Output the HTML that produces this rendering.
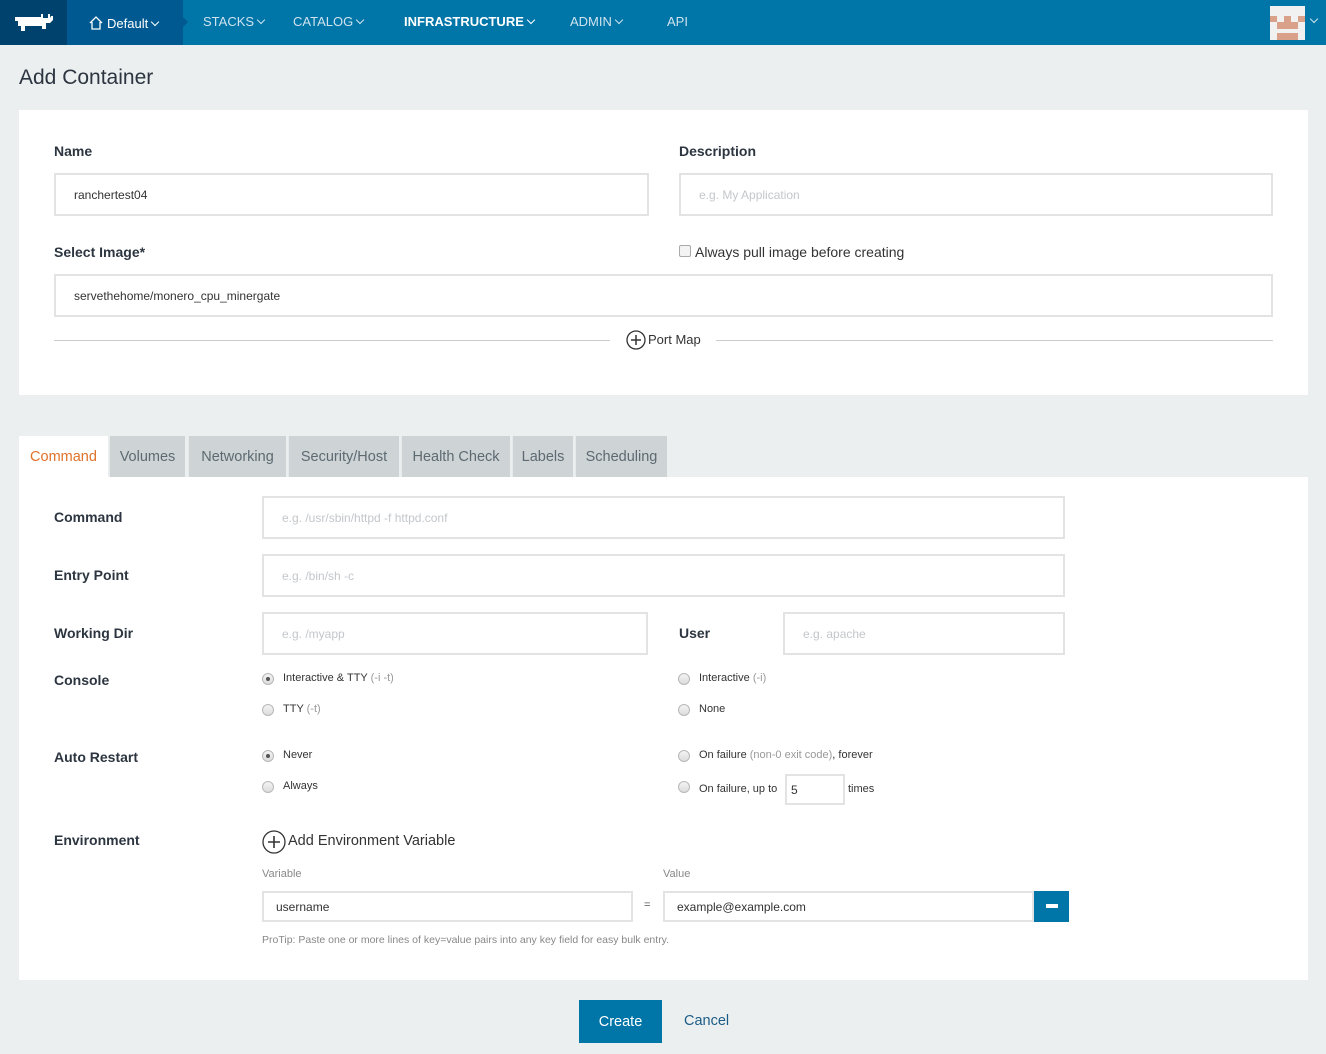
<!DOCTYPE html>
<html><head><meta charset="utf-8">
<style>
*{box-sizing:border-box;margin:0;padding:0}
body{width:1326px;height:1054px;background:#ebeff0;font-family:"Liberation Sans",sans-serif;color:#333;position:relative;overflow:hidden}
.abs{position:absolute}
.nav{position:absolute;left:0;top:0;width:1326px;height:45px;background:#0075a8}
.nav .it{position:absolute;top:14px;font-size:13px;color:#cfe3ee}
.chev{display:inline-block;width:6px;height:6px;border-right:1.5px solid currentColor;border-bottom:1.5px solid currentColor;transform:rotate(45deg);margin-left:4px;position:relative;top:-3px}
.panel{position:absolute;background:#fff}
.lbl{position:absolute;font-size:14px;font-weight:bold;color:#2c3540}
.inp{position:absolute;border:2px solid #e3e3e3;background:#fff;font-size:12px;color:#333;padding-left:18px;display:flex;align-items:center}
.ph{color:#c3c7cb}
.tab{position:absolute;top:436px;height:41px;background:#ced3d5;color:#5d6a72;font-size:14.5px;display:flex;align-items:center;justify-content:center;border-left:1px solid #e7eaeb}
.rad{position:absolute;width:12px;height:12px;border-radius:50%;border:1px solid #b8b8b8;background:linear-gradient(#f4f4f4,#dcdcdc)}
.rad.on::after{content:"";position:absolute;left:3px;top:3px;width:4px;height:4px;border-radius:50%;background:#555}
.rt{position:absolute;font-size:11px;color:#333}
.g{color:#999}
</style></head><body>
<div class="nav">
  <div class="abs" style="left:0;top:0;width:67px;height:45px;background:#00426e"></div>
  <svg class="abs" style="left:14px;top:13px" width="40" height="20" viewBox="0 0 40 20"><path d="M1 4h26v-3h2v4h5v-4h2v4l1-2h2v4l-3 3h-4v6h-4v-3H11v5H7v-5H4V8H1z" fill="#fff"/></svg>
  <div class="abs" style="left:67px;top:0;width:116px;height:45px;background:#005a91"></div>
  <div class="abs" style="left:183px;top:17px;width:0;height:0;border-top:5px solid transparent;border-bottom:5px solid transparent;border-left:5px solid #005a91"></div>
  <svg class="abs" style="left:89px;top:16px" width="14" height="14" viewBox="0 0 14 14"><path d="M1 7L7 1l6 6M3 6v7h8V6" fill="none" stroke="#fff" stroke-width="1.3"/></svg>
  <div class="it" style="left:107px;top:16px;color:#fff">Default<span class="chev"></span></div>
  <div class="it" style="left:203px">STACKS<span class="chev"></span></div>
  <div class="it" style="left:293px">CATALOG<span class="chev"></span></div>
  <div class="it" style="left:404px;color:#fff;font-weight:bold">INFRASTRUCTURE<span class="chev"></span></div>
  <div class="it" style="left:570px">ADMIN<span class="chev"></span></div>
  <div class="it" style="left:667px">API</div>
  <svg class="abs" style="left:1270px;top:6px" width="35" height="34" viewBox="0 0 35 34"><rect width="35" height="34" fill="#f1f1f1"/><rect x="0" y="10" width="7" height="6" fill="#d9a08a"/><rect x="28" y="10" width="7" height="6" fill="#d9a08a"/><rect x="14" y="10" width="7" height="6" fill="#d9a08a"/><rect x="7" y="16" width="21" height="7" fill="#d9a08a"/><rect x="7" y="27" width="21" height="7" fill="#d9a08a"/></svg>
  <div class="it" style="left:1307px;top:13px;color:#cfe3ee"><span class="chev"></span></div>
</div>

<div class="abs" style="left:19px;top:66px;font-size:21px;color:#2c3540">Add Container</div>

<div class="panel" style="left:19px;top:110px;width:1289px;height:285px"></div>
<div class="lbl" style="left:54px;top:143px">Name</div>
<div class="lbl" style="left:679px;top:143px">Description</div>
<div class="inp" style="left:54px;top:173px;width:595px;height:43px">ranchertest04</div>
<div class="inp" style="left:679px;top:173px;width:594px;height:43px"><span class="ph">e.g. My Application</span></div>
<div class="lbl" style="left:54px;top:244px">Select Image*</div>
<div class="abs" style="left:679px;top:245px;width:12px;height:12px;border:1px solid #aaa;border-radius:2px;background:#f3f3f3"></div>
<div class="abs" style="left:695px;top:244px;font-size:14px;color:#333">Always pull image before creating</div>
<div class="inp" style="left:54px;top:274px;width:1219px;height:43px">servethehome/monero_cpu_minergate</div>
<div class="abs" style="left:54px;top:340px;width:556px;height:1px;background:#ccc"></div>
<div class="abs" style="left:716px;top:340px;width:557px;height:1px;background:#ccc"></div>
<svg class="abs" style="left:626px;top:330px" width="20" height="20" viewBox="0 0 20 20"><circle cx="10" cy="10" r="9" fill="none" stroke="#333" stroke-width="1.3"/><path d="M10 5v10M5 10h10" stroke="#333" stroke-width="1.5"/></svg>
<div class="abs" style="left:648px;top:332px;font-size:13px;color:#333">Port Map</div>

<div class="tab" style="left:19px;width:89px;background:#fff;color:#e0712a;border:none">Command</div>
<div class="tab" style="left:109px;width:76px">Volumes</div>
<div class="tab" style="left:188px;width:98px">Networking</div>
<div class="tab" style="left:288px;width:111px">Security/Host</div>
<div class="tab" style="left:401px;width:109px">Health Check</div>
<div class="tab" style="left:512px;width:61px">Labels</div>
<div class="tab" style="left:575px;width:92px">Scheduling</div>

<div class="panel" style="left:19px;top:477px;width:1289px;height:503px"></div>
<div class="lbl" style="left:54px;top:509px">Command</div>
<div class="inp" style="left:262px;top:496px;width:803px;height:43px"><span class="ph">e.g. /usr/sbin/httpd -f httpd.conf</span></div>
<div class="lbl" style="left:54px;top:567px">Entry Point</div>
<div class="inp" style="left:262px;top:554px;width:803px;height:43px"><span class="ph">e.g. /bin/sh -c</span></div>
<div class="lbl" style="left:54px;top:625px">Working Dir</div>
<div class="inp" style="left:262px;top:612px;width:386px;height:43px"><span class="ph">e.g. /myapp</span></div>
<div class="lbl" style="left:679px;top:625px">User</div>
<div class="inp" style="left:783px;top:612px;width:282px;height:43px"><span class="ph">e.g. apache</span></div>

<div class="lbl" style="left:54px;top:672px">Console</div>
<div class="rad on" style="left:262px;top:673px"></div><div class="rt" style="left:283px;top:672px">Interactive &amp; TTY <span class="g">(-i -t)</span></div>
<div class="rad" style="left:262px;top:704px"></div><div class="rt" style="left:283px;top:703px">TTY <span class="g">(-t)</span></div>
<div class="rad" style="left:678px;top:673px"></div><div class="rt" style="left:699px;top:672px">Interactive <span class="g">(-i)</span></div>
<div class="rad" style="left:678px;top:704px"></div><div class="rt" style="left:699px;top:703px">None</div>

<div class="lbl" style="left:54px;top:749px">Auto Restart</div>
<div class="rad on" style="left:262px;top:750px"></div><div class="rt" style="left:283px;top:749px">Never</div>
<div class="rad" style="left:262px;top:781px"></div><div class="rt" style="left:283px;top:780px">Always</div>
<div class="rad" style="left:678px;top:750px"></div><div class="rt" style="left:699px;top:749px">On failure <span class="g">(non-0 exit code)</span>, forever</div>
<div class="rad" style="left:678px;top:781px"></div><div class="rt" style="left:699px;top:783px">On failure, up to</div>
<div class="inp" style="left:785px;top:774px;width:60px;height:31px;padding-left:4px;font-size:12px">5</div>
<div class="rt" style="left:848px;top:783px">times</div>

<div class="lbl" style="left:54px;top:832px">Environment</div>
<svg class="abs" style="left:262px;top:830px" width="24" height="24" viewBox="0 0 24 24"><circle cx="12" cy="12" r="11" fill="none" stroke="#333" stroke-width="1.3"/><path d="M12 6v12M6 12h12" stroke="#333" stroke-width="1.6"/></svg>
<div class="abs" style="left:288px;top:833px;font-size:14.5px;color:#333">Add Environment Variable</div>
<div class="abs" style="left:262px;top:868px;font-size:11px;color:#888">Variable</div>
<div class="abs" style="left:663px;top:868px;font-size:11px;color:#888">Value</div>
<div class="inp" style="left:262px;top:891px;width:371px;height:31px;padding-left:12px">username</div>
<div class="abs" style="left:644px;top:899px;font-size:11px;color:#555">=</div>
<div class="inp" style="left:663px;top:891px;width:371px;height:31px;padding-left:12px">example@example.com</div>
<div class="abs" style="left:1034px;top:891px;width:35px;height:31px;background:#0075a8"><div class="abs" style="left:12px;top:13px;width:12px;height:4px;background:#fff"></div></div>
<div class="abs" style="left:262px;top:934px;font-size:10.5px;color:#888">ProTip: Paste one or more lines of key=value pairs into any key field for easy bulk entry.</div>

<div class="abs" style="left:579px;top:1000px;width:83px;height:43px;background:#0075a8;color:#fff;font-size:14.5px;display:flex;align-items:center;justify-content:center">Create</div>
<div class="abs" style="left:684px;top:1013px;font-size:14.5px;color:#1d5c86">Cancel</div>
</body></html>
